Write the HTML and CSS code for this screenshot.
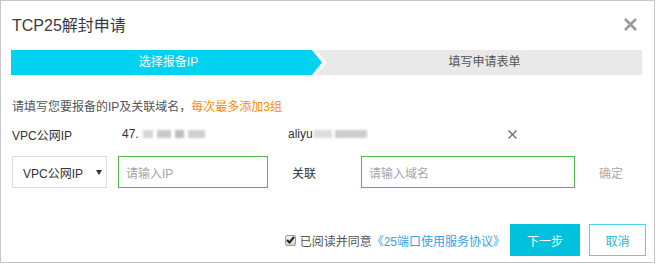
FILE: index.html
```html
<!DOCTYPE html>
<html lang="zh-CN">
<head>
<meta charset="utf-8">
<title>TCP25解封申请</title>
<link rel="stylesheet" href="styles.css">
</head>
<body>
<div class="dialog">
  <div class="header">
    <div class="title">TCP25解封申请</div>
    <svg class="close" width="13" height="13" viewBox="0 0 13 13"><path d="M1 1L12 12M12 1L1 12" stroke="#9a9a9a" stroke-width="2.6" fill="none"/></svg>
  </div>
  <div class="steps">
    <div class="step-active"><div class="step-fill">选择报备IP</div></div>
    <div class="step-next">填写申请表单</div>
  </div>
  <div class="tip">请填写您要报备的IP及关联域名，<span class="warn">每次最多添加3组</span></div>
  <div class="record">
    <div class="c-label">VPC公网IP</div>
    <div class="c-ip">47.<span class="blur b1"></span><span class="blur b2"></span><span class="blur b3"></span><span class="blur b4"></span></div>
    <div class="c-domain">aliyu<span class="blur b5"></span><span class="blur b6"></span></div>
    <svg class="del" width="9" height="9" viewBox="0 0 9 9"><path d="M0.5 0.5L8.5 8.5M8.5 0.5L0.5 8.5" stroke="#6a6a6a" stroke-width="1.3" fill="none"/></svg>
  </div>
  <div class="form-row">
    <div class="select">VPC公网IP<span class="caret"></span></div>
    <div class="input ip-input">请输入IP</div>
    <div class="assoc">关联</div>
    <div class="input domain-input">请输入域名</div>
    <div class="confirm">确定</div>
  </div>
  <div class="footer">
    <span class="check"><svg width="9" height="8" viewBox="0 0 9 8"><path d="M1 4L3.5 6.5L8 1" stroke="#222" stroke-width="2" fill="none"/></svg></span>
    <span class="agree">已阅读并同意<span class="link">《25端口使用服务协议》</span></span>
    <div class="btn primary">下一步</div>
    <div class="btn ghost">取消</div>
  </div>
</div>
</body>
</html>
```

FILE: styles.css
```css
* { box-sizing: border-box; }
html, body { margin: 0; padding: 0; background: #fff; }
body {
  font-family: "Liberation Sans", Arial, "Noto Sans CJK SC", sans-serif;
  font-size: 12px;
  color: #333;
}
.dialog {
  width: 655px;
  height: 263px;
  border: 1px solid #c6c6c6;
  display: flex;
  flex-direction: column;
}
.header {
  display: flex;
  justify-content: space-between;
  align-items: flex-start;
  padding: 13px 17px 0 11px;
}
.title {
  font-size: 16px;
  line-height: 24px;
  color: #3a3a3a;
}
.close { margin-top: 4px; }
.steps {
  display: flex;
  height: 25px;
  margin: 12px 12px 0 10px;
  background: #e9e9e9;
}
.step-active {
  width: 316px;
  height: 25px;
  background: #fff;
  clip-path: polygon(0 0, 305px 0, 316px 50%, 305px 100%, 0 100%);
}
.step-fill {
  width: 311px;
  height: 25px;
  line-height: 25px;
  padding-left: 4px;
  background: #00d3f2;
  color: #fff;
  text-align: center;
  clip-path: polygon(0 0, 301px 0, 311px 50%, 301px 100%, 0 100%);
}
.step-next {
  flex: 1;
  line-height: 25px;
  text-align: center;
  color: #555;
}
.tip {
  margin: 22px 0 0 11px;
  line-height: 20px;
  color: #555;
}
.warn { color: #ff8a00; }
.record {
  display: flex;
  align-items: center;
  margin: 7px 0 0 11px;
  height: 20px;
}
.c-label { width: 110px; }
.c-ip { width: 166px; display: flex; align-items: center; }
.c-domain { width: 220px; display: flex; align-items: center; }
.blur {
  display: inline-block;
  height: 8px;
  filter: blur(1.2px);
}
.b1 { width: 10px; margin-left: 4px; background: #d6d6d6; }
.b2 { width: 14px; margin-left: 4px; background: #c9c9c9; }
.b3 { width: 9px; margin-left: 4px; background: #bdbdbd; }
.b4 { width: 17px; margin-left: 4px; background: #cfcfcf; }
.b5 { width: 18px; margin-left: 1px; background: #dcdcdc; }
.b6 { width: 32px; margin-left: 3px; background: #cdcdcd; }
.form-row {
  display: flex;
  align-items: center;
  margin: 12px 0 0 11px;
  height: 32px;
}
.select {
  width: 95px;
  height: 32px;
  border: 1px solid #dcdcdc;
  padding-left: 10px;
  display: flex;
  align-items: center;
  color: #333;
}
.caret {
  width: 0; height: 0;
  border-left: 3px solid transparent;
  border-right: 3px solid transparent;
  border-top: 5px solid #333;
  margin-left: 13px;
}
.input {
  height: 32px;
  border: 1px solid #52b849;
  padding-left: 7px;
  display: flex;
  align-items: center;
  color: #a6a6a6;
}
.ip-input { width: 150px; margin-left: 11px; }
.assoc { width: 69px; margin-left: 24px; }
.domain-input { width: 214px; }
.confirm { margin-left: 24px; color: #aaa; }
.footer {
  margin-top: auto;
  display: flex;
  align-items: center;
  justify-content: flex-end;
  padding: 0 8px 6px 0;
}
.check {
  width: 11px;
  height: 11px;
  border: 1px solid #9a9a9a;
  border-radius: 2px;
  background: linear-gradient(#f2f2f2, #d4d4d4);
  display: flex;
  align-items: center;
  justify-content: center;
  margin-right: 4px;
}
.agree { color: #555; margin-right: 5px; }
.link { color: #3ca0e6; }
.btn {
  height: 32px;
  display: flex;
  align-items: center;
  justify-content: center;
}
.primary {
  width: 70px;
  background: #00c1de;
  color: #fff;
  margin-right: 9px;
}
.ghost {
  width: 57px;
  border: 1px solid #4fd3ea;
  color: #22b8d6;
}
```
